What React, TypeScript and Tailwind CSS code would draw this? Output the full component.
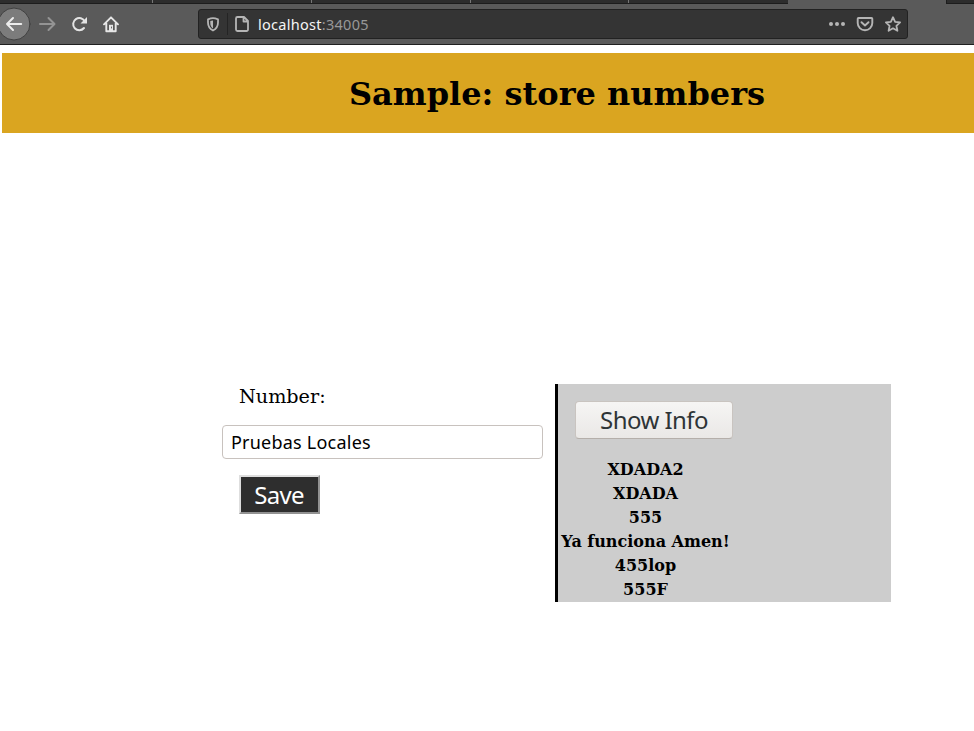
import React from "react";

const rows = ["XDADA2", "XDADA", "555", "Ya funciona Amen!", "455lop", "555F"];
const uiFont = "font-['Noto_Sans',sans-serif]";

function TabStrip() {
  return (
    <div className="flex h-1 w-full">
      <div className="flex h-1 w-[788px] border-b border-[#1d1d1d] bg-[#2d2d2d]">
        <div className="h-[3px] w-[153px] border-r border-[#777]" />
        <div className="h-[3px] w-[159px] border-r border-[#777]" />
        <div className="h-[3px] w-[159px] border-r border-[#777]" />
        <div className="h-[3px] w-[158px] border-r border-[#777]" />
      </div>
      <div className="h-1 w-[158px] bg-[#5a5a5a]" />
      <div className="h-1 flex-1 border-b border-l border-[#1d1d1d] bg-[#2d2d2d]" />
    </div>
  );
}

function Toolbar() {
  return (
    <div className="flex h-[41px] w-full items-center border-b border-[#1f1f1f] bg-[#5a5a5a]">
      <svg width="198" height="40" viewBox="0 4 198 40" fill="none" strokeLinecap="round" strokeLinejoin="round">
        <circle cx="14" cy="24" r="16" fill="#7c7c7c" stroke="#404040" />
        <path d="M21.2 24H7M13 18l-6 6 6 6" stroke="#ededed" strokeWidth="2" />
        <path d="M40 24h14M48.500 18l6 6-6 6" stroke="#949494" strokeWidth="2" />
        <path d="M84.800 21.500A6.100 6.100 0 1 0 84 28" stroke="#e3e3e3" strokeWidth="2" />
        <path d="M87 17v6.500h-6.500z" fill="#e3e3e3" />
        <path d="M104 24.300l7-7 7 7M106.300 23v8.200h9.400V23" stroke="#e6e6e6" strokeWidth="1.900" />
        <path d="M109 31v-6.200h4V31z" fill="#e6e6e6" />
        <path d="M111.500 27v1" stroke="#666" strokeWidth="1" />
      </svg>
      <div className="flex h-[30px] w-[710px] items-center rounded-[3px] border border-[#222] bg-[#343434]">
        <svg width="59" height="28" viewBox="199 10 59 28" fill="none" strokeLinejoin="round">
          <path d="M213 18.200c1.800 0 3.400.5 5 1.100v3.200c0 4-2 6.500-5 8-3-1.500-5-4-5-8v-3.200c1.600-.6 3.200-1.100 5-1.100z" stroke="#b5b5b5" strokeWidth="1.800" />
          <path d="M213 20.500c-1.100 0-2 .2-2.700.5V23c0 2.500 1 4.200 2.700 5.500z" fill="#b5b5b5" />
          <path d="M227.500 13v22" stroke="#242424" />
          <path d="M237.500 17h6.500l4 4v8.500a1.500 1.500 0 0 1-1.500 1.500h-9a1.500 1.500 0 0 1-1.500-1.500v-11a1.500 1.500 0 0 1 1.500-1.500zM243.500 17v4.500h4.500" stroke="#b5b5b5" strokeWidth="1.800" />
        </svg>
        <span className={`${uiFont} text-[14.5px] leading-[20px] tracking-[0.28px] text-[#989898]`}>
          <span className="text-[#f4f4f4]">localhost</span>:34005
        </span>
        <svg className="ml-auto" width="80" height="28" viewBox="827 10 80 28" fill="none" strokeLinejoin="round" strokeLinecap="round">
          <g fill="#b5b5b5">
            <circle cx="831" cy="24" r="2" />
            <circle cx="837" cy="24" r="2" />
            <circle cx="843" cy="24" r="2" />
          </g>
          <path d="M858.500 18h13q.8 0 .8.800V23a7.300 7.300 0 0 1-14.600 0v-4.200q0-.8.800-.8z" stroke="#b5b5b5" strokeWidth="1.900" />
          <path d="M861.500 22.200l3.500 3.300 3.500-3.300" stroke="#b5b5b5" strokeWidth="1.900" />
          <path d="M893 17.200l2.100 4.600 5 .6-3.700 3.400 1 5-4.400-2.500-4.400 2.500 1-5-3.700-3.400 5-.6z" stroke="#b5b5b5" strokeWidth="1.800" />
        </svg>
      </div>
    </div>
  );
}

export default function App() {
  return (
    <div className="h-[731px] w-[974px] overflow-hidden bg-white font-['DejaVu_Serif',serif] text-black">
      <TabStrip />
      <Toolbar />
      <header className="mt-2 ml-0.5 flex h-20 items-center bg-[#daa520] pt-0.5 pl-[347px]">
        <h1 className="text-[32px] leading-[38px] font-bold whitespace-nowrap">Sample: store numbers</h1>
      </header>
      <main className="mt-[251px] ml-[222px] flex items-start">
        <section className="w-[333px]">
          <label htmlFor="number" className="ml-[17px] block h-[41px] pt-px text-[19.2px] leading-[24px]">Number:</label>
          <input
            id="number"
            defaultValue="Pruebas Locales"
            className={`${uiFont} block h-[34px] w-[321px] rounded-[4px] border border-[#c8c2be] bg-white px-[8px] text-[18px] tracking-[0.22px] outline-none`}
          />
          <button className={`${uiFont} mt-4 ml-[17px] flex h-[39px] w-[81px] items-center justify-center border-2 border-t-[#dedede] border-r-[#929292] border-b-[#929292] border-l-[#dedede] bg-[#2e2e2e] pr-px text-[24px] leading-[30px] tracking-[-0.7px] text-white`}>
            Save
          </button>
        </section>
        <section className="h-[218px] w-[336px] border-l-[3px] border-black bg-[#cdcdcd]">
          <button className={`${uiFont} mt-[17px] ml-[17px] flex h-[38px] w-[158px] items-center justify-center rounded-[4px] border border-[#c9c4c0] border-b-[#b5afaa] bg-linear-to-b from-[#f6f5f4] to-[#eae8e6] text-[24px] leading-[30px] tracking-[-0.55px] text-[#2e3436]`}>
            Show Info
          </button>
          <ul className="mt-[19px] ml-[3px] w-[169px] text-center text-[16px] leading-[24px] font-bold whitespace-nowrap">
            {rows.map((row) => (
              <li key={row}>{row}</li>
            ))}
          </ul>
        </section>
      </main>
    </div>
  );
}
